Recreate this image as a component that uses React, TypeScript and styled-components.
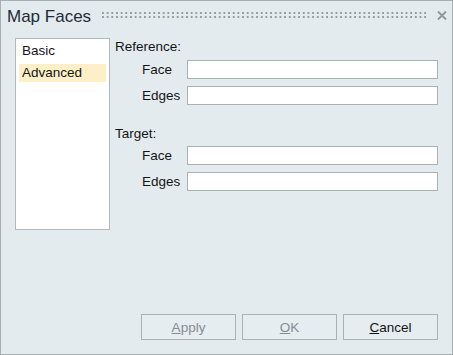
import React, { useState } from 'react';
import styled, { createGlobalStyle } from 'styled-components';

const GlobalStyle = createGlobalStyle`
  html, body {
    margin: 0;
    padding: 0;
    background: #ffffff;
  }
  * {
    box-sizing: border-box;
  }
`;

const Window = styled.div`
  width: 453px;
  height: 355px;
  border: 1px solid #a7afb3;
  background: #e4ebef;
  display: flex;
  flex-direction: column;
  font-family: 'Liberation Sans', Arial, sans-serif;
  font-size: 13.5px;
  color: #141414;
`;

const TitleBar = styled.div`
  height: 30px;
  display: flex;
  align-items: center;
  padding: 0 5px 0 6px;
`;

const Title = styled.div`
  font-size: 17px;
  line-height: 20px;
  color: #1f2b37;
  margin-top: 1px;
`;

const Grip = styled.div`
  flex: 1;
  height: 6px;
  margin: 0 9px 3px 11px;
`;

const CloseButton = styled.button`
  border: none;
  background: none;
  padding: 0;
  width: 10px;
  height: 9px;
  display: flex;
  margin-bottom: 2px;
`;

const Body = styled.div`
  display: flex;
  padding: 7px 14px 0 14px;
  gap: 6px;
`;

const PageList = styled.div`
  width: 95px;
  height: 192px;
  background: #ffffff;
  border: 1px solid #b1b9bd;
  padding: 3px 3px;
  display: flex;
  flex-direction: column;
  gap: 4px;
`;

const PageItem = styled.div<{ $selected?: boolean }>`
  height: 18px;
  line-height: 18px;
  padding-left: 3px;
  background: ${(p) => (p.$selected ? '#fdf0c9' : 'transparent')};
  cursor: default;
`;

const Panel = styled.div`
  flex: 1;
  display: flex;
  flex-direction: column;
  padding-top: 1px;
`;

const Heading = styled.div<{ $top?: number }>`
  height: 16px;
  line-height: 16px;
  margin-top: ${(p) => p.$top ?? 0}px;
  margin-left: -1px;
`;

const Fields = styled.div<{ $top: number }>`
  display: flex;
  flex-direction: column;
  gap: 7px;
  margin-top: ${(p) => p.$top}px;
  padding-left: 26px;
`;

const FieldRow = styled.label`
  display: flex;
  align-items: center;
  height: 19px;
`;

const FieldLabel = styled.span`
  width: 45px;
  line-height: 19px;
`;

const TextInput = styled.input`
  flex: 1;
  height: 19px;
  border: 1px solid #aab1b5;
  background: #ffffff;
  padding: 0 3px;
  font: inherit;
  outline: none;
`;

const Footer = styled.div`
  margin-top: auto;
  display: flex;
  justify-content: flex-end;
  gap: 6px;
  padding: 0 14px 14px 0;
`;

const DialogButton = styled.button<{ $disabled?: boolean }>`
  width: 95px;
  height: 26px;
  border: 1px solid #aab1b5;
  background: #e6edf1;
  font-family: inherit;
  font-size: 13.5px;
  color: ${(p) => (p.$disabled ? '#858c92' : '#141414')};
  padding: 0;
`;

const Mnemonic = styled.span`
  text-decoration: underline;
`;

const GripDots = () => (
  <svg width="100%" height="6" style={{ display: 'block' }} shapeRendering="crispEdges">
    <defs>
      <pattern id="grip" width="4.67" height="6" patternUnits="userSpaceOnUse">
        <rect x="0" y="0" width="2" height="2" fill="#959ca0" />
        <rect x="0" y="4" width="2" height="2" fill="#959ca0" />
      </pattern>
    </defs>
    <rect width="100%" height="6" fill="url(#grip)" />
  </svg>
);

const CloseIcon = () => (
  <svg width="10" height="9" viewBox="0 0 10 9">
    <path d="M1 0.5 L9 8.5 M9 0.5 L1 8.5" stroke="#8e969a" strokeWidth="1.9" fill="none" />
  </svg>
);

const pages = ['Basic', 'Advanced'];

export default function App() {
  const [page, setPage] = useState('Advanced');

  const renderFields = (top: number) => (
    <Fields $top={top}>
      <FieldRow>
        <FieldLabel>Face</FieldLabel>
        <TextInput />
      </FieldRow>
      <FieldRow>
        <FieldLabel>Edges</FieldLabel>
        <TextInput />
      </FieldRow>
    </Fields>
  );

  return (
    <>
      <GlobalStyle />
      <Window>
        <TitleBar>
          <Title>Map Faces</Title>
          <Grip>
            <GripDots />
          </Grip>
          <CloseButton>
            <CloseIcon />
          </CloseButton>
        </TitleBar>
        <Body>
          <PageList>
            {pages.map((p) => (
              <PageItem key={p} $selected={p === page} onClick={() => setPage(p)}>
                {p}
              </PageItem>
            ))}
          </PageList>
          <Panel>
            <Heading>Reference:</Heading>
            {renderFields(5)}
            <Heading $top={21}>Target:</Heading>
            {renderFields(4)}
          </Panel>
        </Body>
        <Footer>
          <DialogButton $disabled>
            <Mnemonic>A</Mnemonic>pply
          </DialogButton>
          <DialogButton $disabled>
            <Mnemonic>O</Mnemonic>K
          </DialogButton>
          <DialogButton>
            <Mnemonic>C</Mnemonic>ancel
          </DialogButton>
        </Footer>
      </Window>
    </>
  );
}
